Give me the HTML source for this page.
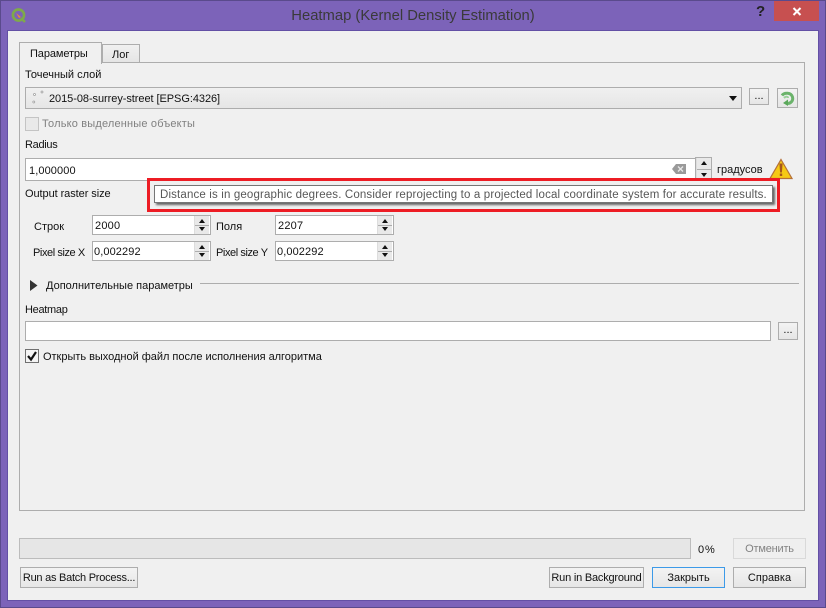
<!DOCTYPE html>
<html><head><meta charset="utf-8"><style>
html,body{margin:0;padding:0}
body{width:826px;height:608px;overflow:hidden;position:relative;background:#7c63b9;font:11px/14px "Liberation Sans","Noto Sans CJK JP",sans-serif;color:#111}
div,span.a{position:absolute;box-sizing:border-box}
.t{white-space:nowrap;height:14px}
.in{background:#fff;border:1px solid #adadad}
.in2{background:#fff;border:1px solid #adadad}
.btn{border:1px solid #adadad;background:linear-gradient(#f3f3f3,#e6e6e6);text-align:center;white-space:nowrap}
.sp{width:15px;background:#e9e9e9;border-left:1px solid #ddd}
.sp:before{content:"";position:absolute;left:4px;top:3px;border:3.5px solid transparent;border-top:0;border-bottom:4px solid #111}
.sp:after{content:"";position:absolute;left:4px;bottom:3px;border:3.5px solid transparent;border-bottom:0;border-top:4px solid #111}
.sp i{position:absolute;left:0;right:0;top:50%;height:1px;background:#adadad}
</style></head><body>
<div style="left:0;top:0;width:826px;height:1px;background:#5a4a8c"></div>
<div style="left:0;top:0;width:1px;height:608px;background:#5a4a8c"></div>
<div style="left:825px;top:0;width:1px;height:608px;background:#5a4a8c"></div>
<div style="left:0;top:607px;width:826px;height:1px;background:#5a4a8c"></div>
<div style="left:7px;top:30px;width:812px;height:571px;background:#f0f0f0;border:1px solid #6350a5"></div>

<svg style="position:absolute;left:10px;top:7px" width="17" height="18" viewBox="0 0 17 18"><circle cx="8.500" cy="8" r="5.600" fill="none" stroke="#7eaa4a" stroke-width="2.600"/><path d="M11 11l4 4" stroke="#7eaa4a" stroke-width="2.600"/><path d="M6 6l5 4-2 1z" fill="#e88a3a"/></svg>
<div class="t" style="left:0;top:8px;width:826px;text-align:center;font-size:14.800px;line-height:16px;height:16px;color:#3a3a3a">Heatmap (Kernel Density Estimation)</div>
<div class="t" style="left:756px;top:3px;font-size:15px;line-height:18px;height:18px;font-weight:bold;color:#222">?</div>
<div style="left:774px;top:1px;width:45px;height:20px;background:#c75050"></div>
<svg style="position:absolute;left:792px;top:7px" width="10" height="9" viewBox="0 0 10 9"><path d="M1.500 1l7 7M8.500 1l-7 7" stroke="#fff" stroke-width="2"/></svg>

<div style="left:19px;top:62px;width:786px;height:449px;border:1px solid #adadad;background:#f0f0f0"></div>
<div style="left:102px;top:44px;width:38px;height:19px;border:1px solid #adadad;background:linear-gradient(#f0f0f0,#e5e5e5)"></div>
<div style="left:19px;top:42px;width:83px;height:22px;border:1px solid #adadad;border-bottom:0;background:#f0f0f0"></div>
<div class="t" style="left:30px;top:47px;letter-spacing:-.1px">Параметры</div>
<div class="t" style="left:112px;top:48px">Лог</div>

<div class="t" style="left:25px;top:68px">Точечный слой</div>
<div class="btn" style="left:25px;top:87px;width:717px;height:22px;background:linear-gradient(#f0f0f0,#e6e6e6)"></div>
<svg style="position:absolute;left:32px;top:90px" width="14" height="15" viewBox="0 0 14 15"><g fill="#fff" stroke="#999" stroke-width=".7"><circle cx="2.500" cy="4.500" r="1"/><circle cx="10" cy="2" r="1"/><circle cx="1.800" cy="12" r="1"/></g></svg>
<div class="t" style="left:49px;top:92px;letter-spacing:-.06px">2015-08-surrey-street [EPSG:4326]</div>
<svg style="position:absolute;left:729px;top:96px" width="10" height="6"><path d="M0 0h8l-4 5z" fill="#111"/></svg>
<div class="btn" style="left:749px;top:88px;width:20px;height:17px;line-height:14px">...</div>
<div class="btn" style="left:777px;top:88px;width:21px;height:20px"></div>
<svg style="position:absolute;left:779px;top:90px" width="17" height="17" viewBox="0 0 17 17"><path d="M3 5.500C5 2.500 12 2 13.500 7c1 4-2 6.500-5 6.500" fill="none" stroke="#6bb36b" stroke-width="3"/><path d="M9 9.500l-5 3.500 5 3z" fill="#5aa85a"/><path d="M5 8c2-2 4-1.500 4 0" fill="none" stroke="#9ad09a" stroke-width="2"/></svg>

<div style="left:25px;top:117px;width:14px;height:14px;border:1px solid #c4c4c4;background:#e9e9e9"></div>
<div class="t" style="left:42px;top:117px;color:#808080;letter-spacing:.18px">Только выделенные объекты</div>

<div class="t" style="left:25px;top:138px;letter-spacing:-.3px">Radius</div>
<div class="in" style="left:25px;top:158px;width:671px;height:23px;border-right:0"></div>
<div class="t" style="left:29px;top:164px;letter-spacing:.1px">1,000000</div>
<svg style="position:absolute;left:672px;top:164px" width="14" height="10" viewBox="0 0 14 10"><path d="M0 5l4-5h10v10H4z" fill="#9a9a9a"/><path d="M6 2.500l5 5M11 2.500l-5 5" stroke="#e8e8e8" stroke-width="1.300"/></svg>
<div style="left:695px;top:157px;width:17px;height:24px;border:1px solid #adadad;background:#e9e9e9"></div>
<div class="sp" style="left:696px;top:158px;height:22px"><i></i></div>
<div class="t" style="left:717px;top:163px">градусов</div>
<svg style="position:absolute;left:769px;top:158px" width="24" height="22" viewBox="0 0 24 22"><path d="M12 1.500L23 20.500H1z" fill="#f6c915" stroke="#b5703a" stroke-width="1.200"/><path d="M10.400 5.500h3.200l-.7 9h-1.800z" fill="#a5561c"/><rect x="10.800" y="15.500" width="2.400" height="2.500" fill="#a5561c"/></svg>

<div class="t" style="left:25px;top:187px;letter-spacing:-.07px">Output raster size</div>

<div class="t" style="left:34px;top:220px">Строк</div>
<div class="in2" style="left:92px;top:215px;width:119px;height:20px"></div>
<div class="t" style="left:95px;top:219px;letter-spacing:.2px">2000</div>
<div class="sp" style="left:194px;top:216px;height:18px"><i></i></div>
<div class="t" style="left:216px;top:220px">Поля</div>
<div class="in2" style="left:275px;top:215px;width:119px;height:20px"></div>
<div class="t" style="left:278px;top:219px;letter-spacing:.2px">2207</div>
<div class="sp" style="left:377px;top:216px;height:18px"><i></i></div>

<div class="t" style="left:33px;top:246px;letter-spacing:-.42px">Pixel size X</div>
<div class="in2" style="left:92px;top:241px;width:119px;height:20px"></div>
<div class="t" style="left:94px;top:245px;letter-spacing:.1px">0,002292</div>
<div class="sp" style="left:194px;top:242px;height:18px"><i></i></div>
<div class="t" style="left:216px;top:246px;letter-spacing:-.42px">Pixel size Y</div>
<div class="in2" style="left:275px;top:241px;width:119px;height:20px"></div>
<div class="t" style="left:277px;top:245px;letter-spacing:.1px">0,002292</div>
<div class="sp" style="left:377px;top:242px;height:18px"><i></i></div>

<div style="left:147px;top:178px;width:633px;height:34px;border:3px solid #ed1c24;background:#f0f0f0"></div>
<div style="left:154px;top:185px;width:619px;height:18px;background:#fff;border:1px solid #767676;box-shadow:2px 2px 2px #666"></div>
<div class="t" style="left:160px;top:188px;color:#575757;letter-spacing:.15px;font-size:11.500px">Distance is in geographic degrees. Consider reprojecting to a projected local coordinate system for accurate results.</div>

<svg style="position:absolute;left:30px;top:280px" width="8" height="11"><path d="M0 0l7.500 5.500L0 11z" fill="#333"/></svg>
<div class="t" style="left:46px;top:279px">Дополнительные параметры</div>
<div style="left:200px;top:283px;width:599px;height:1px;background:#adadad"></div>

<div class="t" style="left:25px;top:303px;letter-spacing:-.3px">Heatmap</div>
<div class="in2" style="left:25px;top:321px;width:746px;height:20px"></div>
<div class="btn" style="left:778px;top:322px;width:20px;height:18px;line-height:15px">...</div>
<div style="left:25px;top:349px;width:14px;height:14px;border:1px solid #707070;background:#f4f4f4"></div>
<svg style="position:absolute;left:26px;top:350px" width="12" height="12" viewBox="0 0 12 12"><path d="M2 6l3 3.500L10 2" fill="none" stroke="#111" stroke-width="2.200"/></svg>
<div class="t" style="left:43px;top:350px;letter-spacing:-.02px">Открыть выходной файл после исполнения алгоритма</div>

<div style="left:19px;top:538px;width:672px;height:21px;border:1px solid #bcbcbc;background:#e6e6e6"></div>
<div class="t" style="left:698px;top:543px;letter-spacing:.9px">0%</div>
<div class="btn" style="left:733px;top:538px;width:73px;height:21px;border-color:#d9d9d9;background:#efefef;color:#838383;line-height:21px;letter-spacing:-.2px">Отменить</div>

<div class="btn" style="left:20px;top:567px;width:118px;height:21px;line-height:20px;letter-spacing:-.25px">Run as Batch Process...</div>
<div class="btn" style="left:549px;top:567px;width:95px;height:21px;line-height:20px;letter-spacing:-.2px">Run in Background</div>
<div class="btn" style="left:652px;top:567px;width:73px;height:21px;line-height:20px;border-color:#3c9ae8">Закрыть</div>
<div class="btn" style="left:733px;top:567px;width:73px;height:21px;line-height:20px">Справка</div>
</body></html>
